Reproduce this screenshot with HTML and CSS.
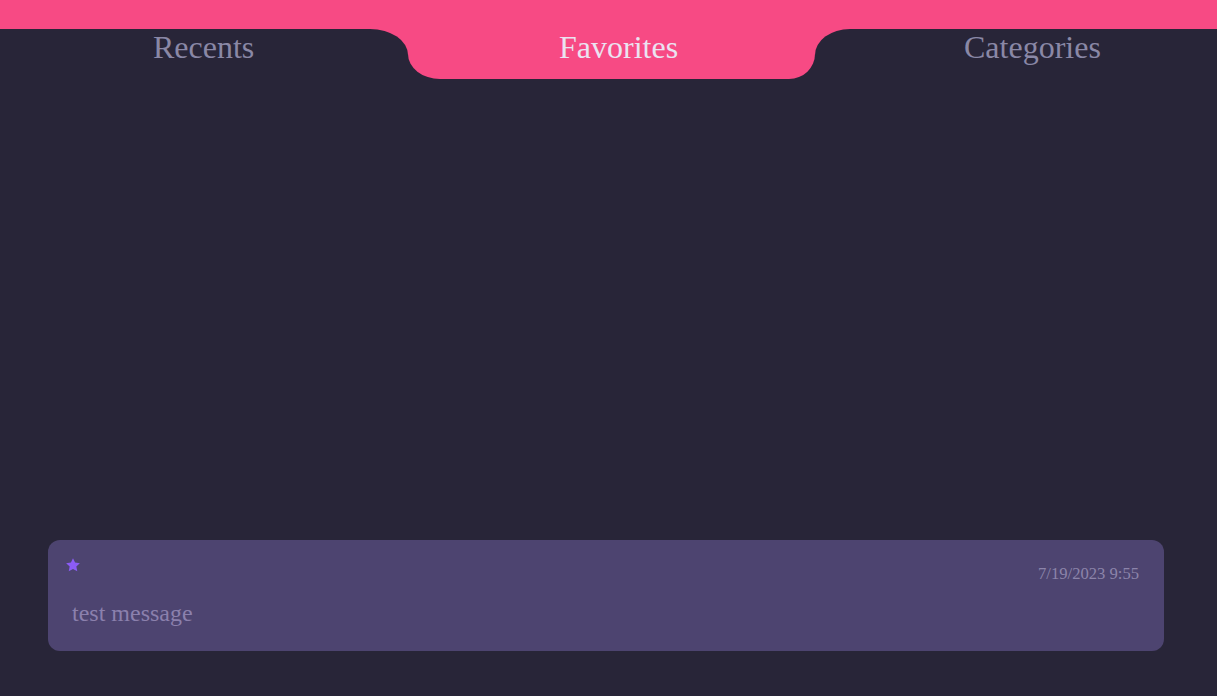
FILE: index.html
```html
<!DOCTYPE html>
<html lang="en">
<head>
<meta charset="utf-8">
<title>Favorites</title>
<link rel="stylesheet" href="styles.css">
</head>
<body>
  <header class="tabs">
    <div class="tab tab-left">Recents</div>
    <div class="tab-slot"><div class="tab tab-active">Favorites</div></div>
    <div class="tab tab-right">Categories</div>
  </header>
  <main class="content"></main>
  <article class="card">
    <svg class="star" viewBox="0 0 24 24" width="16" height="16" aria-hidden="true">
      <path d="M12 1.8l3.1 6.6 7.2.9-5.3 5 1.4 7.1L12 17.9l-6.4 3.5 1.4-7.1-5.3-5 7.2-.9z" fill="#8b5cf6"/>
    </svg>
    <div class="card-head"><span class="stamp">7/19/2023 9:55</span></div>
    <p class="message">test message</p>
  </article>
</body>
</html>
```

FILE: styles.css
```css
html, body {
  margin: 0;
  height: 100%;
}
body {
  background: #282538;
  font-family: "Liberation Serif", "Times New Roman", serif;
  display: flex;
  flex-direction: column;
  overflow: hidden;
}
.tabs {
  background: #f74a84;
  padding-top: 29px;
  display: grid;
  grid-template-columns: 408px 407px 1fr;
}
.tab {
  height: 50px;
  font-size: 32px;
  line-height: normal;
  color: #8a88a6;
  box-sizing: border-box;
}
.tab-left {
  background: #282538;
  padding-left: 153px;
  border-top-right-radius: 38px 26px;
}
.tab-slot {
  background: #282538;
}
.tab-active {
  background: #f74a84;
  color: #ebe3f1;
  padding-left: 151px;
  border-bottom-left-radius: 32px 25px;
  border-bottom-right-radius: 26px 25px;
}
.tab-right {
  background: #282538;
  padding-left: 149px;
  border-top-left-radius: 35px 26px;
}
.content {
  flex: 1;
}
.card {
  position: relative;
  margin: 0 53px 45px 48px;
  padding: 24px 25px 24px 24px;
  background: #4d4470;
  border-radius: 12px;
}
.star {
  position: absolute;
  left: 17px;
  top: 17px;
}
.card-head {
  display: flex;
  justify-content: flex-end;
}
.stamp {
  font-size: 16.6px;
  line-height: 18px;
  color: #8c84aa;
  position: relative;
  top: 1px;
}
.message {
  margin: 17px 0 0;
  font-size: 24px;
  line-height: 28px;
  color: #8b80ad;
}
```
